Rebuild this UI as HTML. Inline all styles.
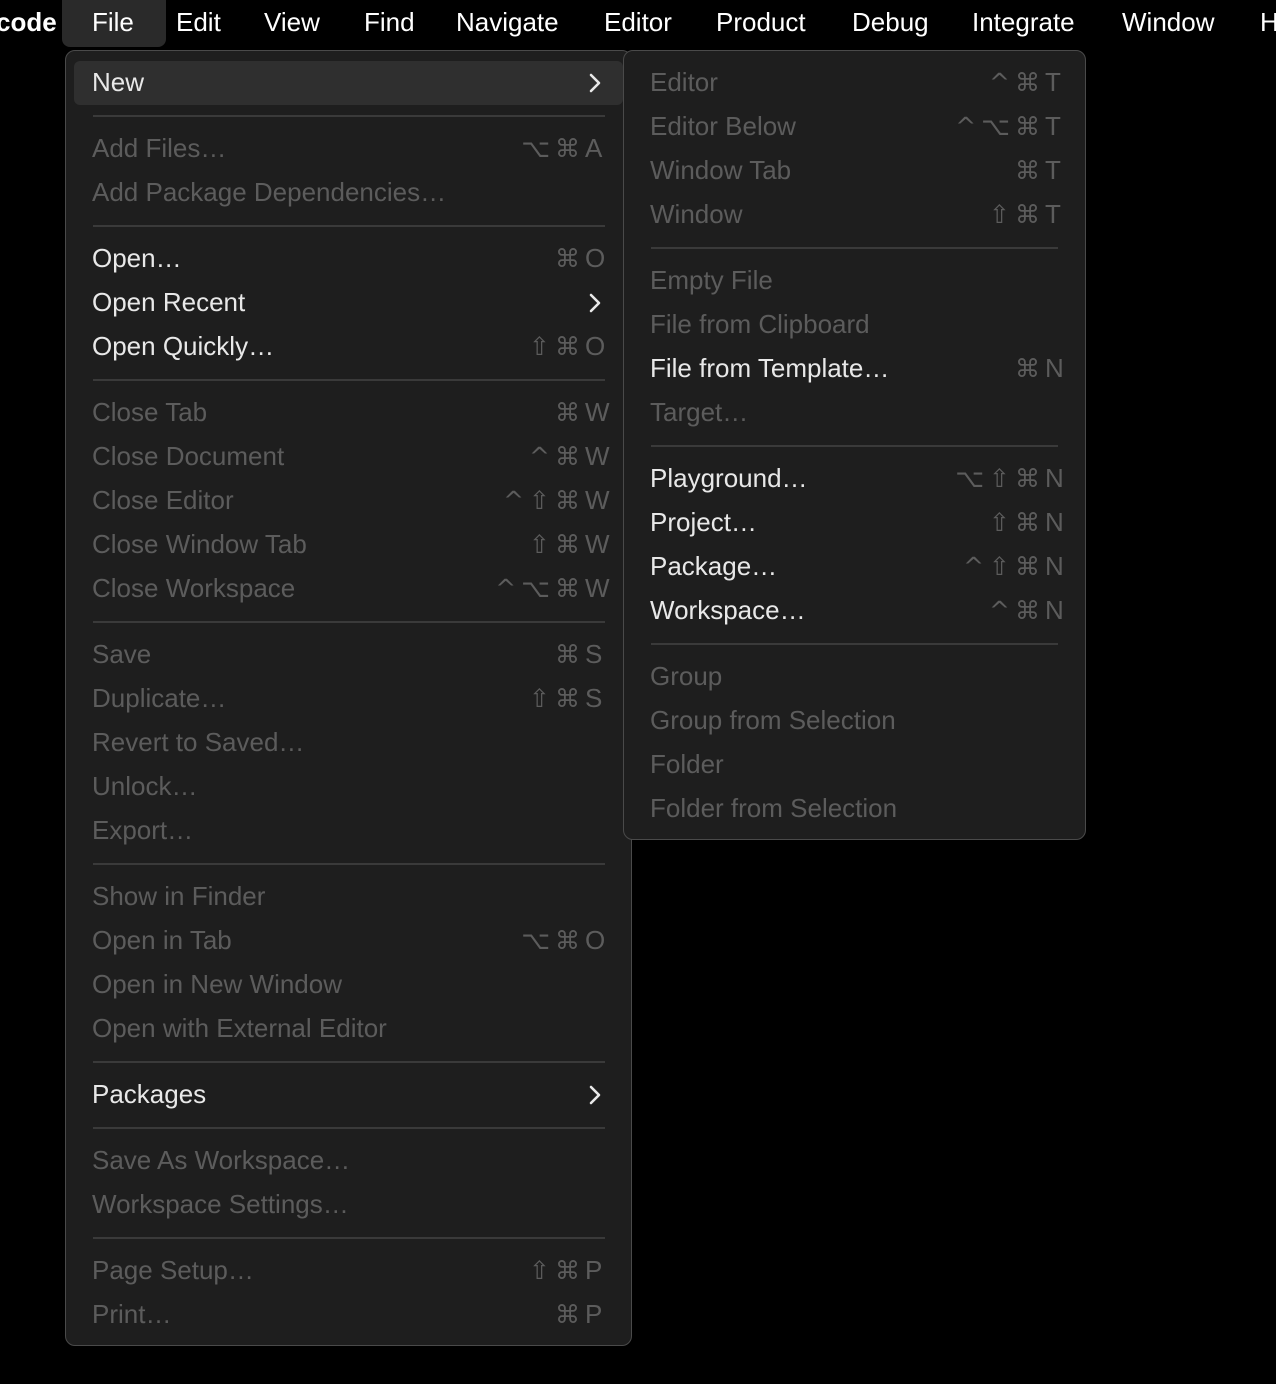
<!DOCTYPE html>
<html><head><meta charset="utf-8"><style>
*{margin:0;padding:0;box-sizing:border-box}
body{width:1276px;height:1384px;background:#000;position:relative;overflow:hidden;font-family:"Liberation Sans","DejaVu Sans",sans-serif;color:#e8e8e8}
.mb{position:absolute;top:0;height:46px;line-height:45px;font-size:26px;color:#fff}
.filehl{position:absolute;left:62px;top:0;width:104px;height:47px;background:#2a2a2a;border-radius:0 0 8px 8px}
.menu{position:absolute;background:#1e1e1e;border:1.5px solid #4a4a4a;border-radius:10px}
.r{position:absolute;left:0;right:0;height:44px;line-height:42px;font-size:26px;padding-left:26px;color:#5c5c5c;white-space:nowrap}
.r.e{color:#e8e8e8}
.hl{position:absolute;left:8px;right:8px;height:44px;background:#2f2f2f;border-radius:6px}
.k{position:absolute;top:0;font-size:25px;color:#5c5c5c;font-family:"DejaVu Sans","Liberation Sans",sans-serif;letter-spacing:5px}
.k b{font-weight:normal;font-family:"Liberation Sans",sans-serif;display:inline-block;width:20px;text-align:left;letter-spacing:0;font-size:26px}
.ar{position:absolute;top:12px;width:12px;height:20px}
.s{position:absolute;height:2px;background:#3a3a3a}
#m .k{right:26px}#m .ar{right:30px}#m .s{left:27px;width:512px}
#sub .k{right:20px}#sub .s{left:27px;width:407px}
</style></head><body>
<div class="filehl"></div>
<div class="mb" style="left:-4px;font-weight:bold">code</div>
<div class="mb" style="left:92px">File</div>
<div class="mb" style="left:176px">Edit</div>
<div class="mb" style="left:264px">View</div>
<div class="mb" style="left:364px">Find</div>
<div class="mb" style="left:456px">Navigate</div>
<div class="mb" style="left:604px">Editor</div>
<div class="mb" style="left:716px">Product</div>
<div class="mb" style="left:852px">Debug</div>
<div class="mb" style="left:972px">Integrate</div>
<div class="mb" style="left:1122px">Window</div>
<div class="mb" style="left:1260px">H</div>

<div class="menu" id="m" style="left:65px;top:50px;width:567px;height:1296px">
<div class="hl" style="top:10px"></div>
<div class="r e" style="top:10px">New<svg class="ar" viewBox="0 0 12 20"><polyline points="2,2 10,10 2,18" fill="none" stroke="#e8e8e8" stroke-width="2.6" stroke-linecap="round" stroke-linejoin="round"/></svg></div>
<div class="s" style="top:64px"></div>
<div class="r" style="top:76px">Add Files…<span class="k">⌥⌘<b>A</b></span></div>
<div class="r" style="top:120px">Add Package Dependencies…</div>
<div class="s" style="top:174px"></div>
<div class="r e" style="top:186px">Open…<span class="k">⌘<b>O</b></span></div>
<div class="r e" style="top:230px">Open Recent<svg class="ar" viewBox="0 0 12 20"><polyline points="2,2 10,10 2,18" fill="none" stroke="#e8e8e8" stroke-width="2.6" stroke-linecap="round" stroke-linejoin="round"/></svg></div>
<div class="r e" style="top:274px">Open Quickly…<span class="k">⇧⌘<b>O</b></span></div>
<div class="s" style="top:328px"></div>
<div class="r" style="top:340px">Close Tab<span class="k">⌘<b>W</b></span></div>
<div class="r" style="top:384px">Close Document<span class="k">^⌘<b>W</b></span></div>
<div class="r" style="top:428px">Close Editor<span class="k">^⇧⌘<b>W</b></span></div>
<div class="r" style="top:472px">Close Window Tab<span class="k">⇧⌘<b>W</b></span></div>
<div class="r" style="top:516px">Close Workspace<span class="k">^⌥⌘<b>W</b></span></div>
<div class="s" style="top:570px"></div>
<div class="r" style="top:582px">Save<span class="k">⌘<b>S</b></span></div>
<div class="r" style="top:626px">Duplicate…<span class="k">⇧⌘<b>S</b></span></div>
<div class="r" style="top:670px">Revert to Saved…</div>
<div class="r" style="top:714px">Unlock…</div>
<div class="r" style="top:758px">Export…</div>
<div class="s" style="top:812px"></div>
<div class="r" style="top:824px">Show in Finder</div>
<div class="r" style="top:868px">Open in Tab<span class="k">⌥⌘<b>O</b></span></div>
<div class="r" style="top:912px">Open in New Window</div>
<div class="r" style="top:956px">Open with External Editor</div>
<div class="s" style="top:1010px"></div>
<div class="r e" style="top:1022px">Packages<svg class="ar" viewBox="0 0 12 20"><polyline points="2,2 10,10 2,18" fill="none" stroke="#e8e8e8" stroke-width="2.6" stroke-linecap="round" stroke-linejoin="round"/></svg></div>
<div class="s" style="top:1076px"></div>
<div class="r" style="top:1088px">Save As Workspace…</div>
<div class="r" style="top:1132px">Workspace Settings…</div>
<div class="s" style="top:1186px"></div>
<div class="r" style="top:1198px">Page Setup…<span class="k">⇧⌘<b>P</b></span></div>
<div class="r" style="top:1242px">Print…<span class="k">⌘<b>P</b></span></div>
</div>

<div class="menu" id="sub" style="left:623px;top:50px;width:463px;height:790px">
<div class="r" style="top:10px">Editor<span class="k">^⌘<b>T</b></span></div>
<div class="r" style="top:54px">Editor Below<span class="k">^⌥⌘<b>T</b></span></div>
<div class="r" style="top:98px">Window Tab<span class="k">⌘<b>T</b></span></div>
<div class="r" style="top:142px">Window<span class="k">⇧⌘<b>T</b></span></div>
<div class="s" style="top:196px"></div>
<div class="r" style="top:208px">Empty File</div>
<div class="r" style="top:252px">File from Clipboard</div>
<div class="r e" style="top:296px">File from Template…<span class="k">⌘<b>N</b></span></div>
<div class="r" style="top:340px">Target…</div>
<div class="s" style="top:394px"></div>
<div class="r e" style="top:406px">Playground…<span class="k">⌥⇧⌘<b>N</b></span></div>
<div class="r e" style="top:450px">Project…<span class="k">⇧⌘<b>N</b></span></div>
<div class="r e" style="top:494px">Package…<span class="k">^⇧⌘<b>N</b></span></div>
<div class="r e" style="top:538px">Workspace…<span class="k">^⌘<b>N</b></span></div>
<div class="s" style="top:592px"></div>
<div class="r" style="top:604px">Group</div>
<div class="r" style="top:648px">Group from Selection</div>
<div class="r" style="top:692px">Folder</div>
<div class="r" style="top:736px">Folder from Selection</div>
</div>
</body></html>
